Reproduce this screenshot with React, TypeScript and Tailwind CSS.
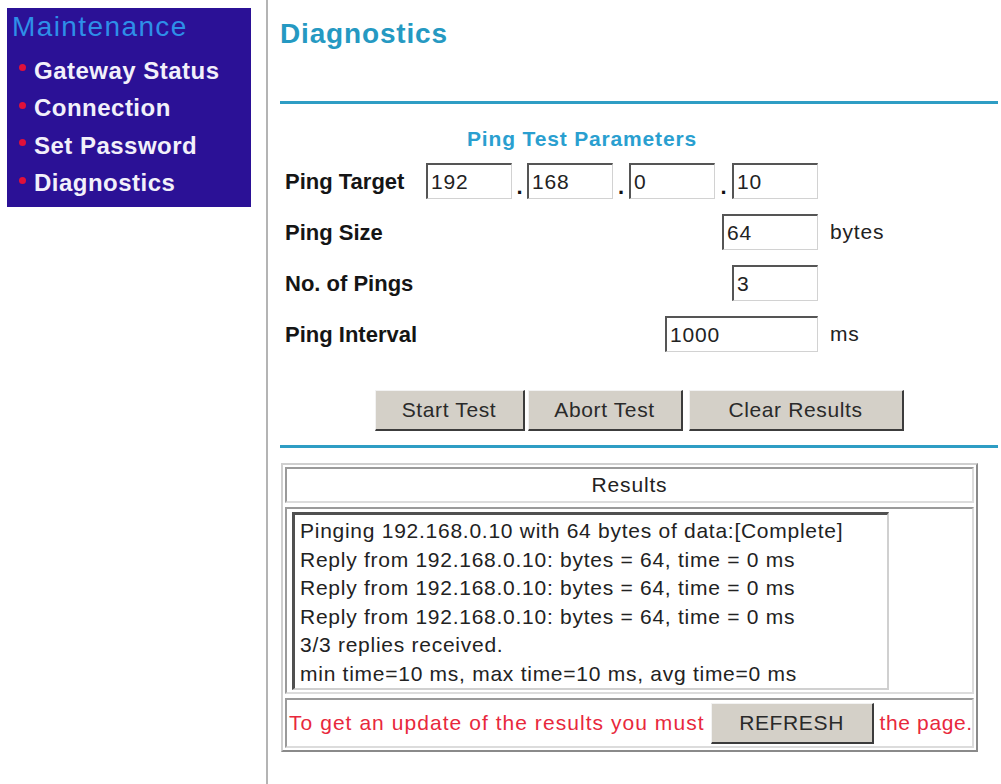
import React from "react";

const font = { fontFamily: '"Liberation Sans", Arial, sans-serif' };

function Field({ value, width }: { value: string; width: string }) {
  return (
    <input
      readOnly
      defaultValue={value}
      className={`${width} h-[36px] bg-white border-t-2 border-l-2 border-r border-b border-t-[#555555] border-l-[#555555] border-r-[#d2d2d2] border-b-[#d2d2d2] pl-[3px] text-[21px] tracking-[0.04em] text-[#222222] outline-none`}
    />
  );
}

function Dot({ width }: { width: string }) {
  return (
    <span className={`${width} self-end pb-[1px] text-center text-[22px] leading-none font-bold text-[#111111]`}>.</span>
  );
}

function Btn({ label, width }: { label: string; width: string }) {
  return (
    <button className={`${width} h-[41px] bg-[#d4d0c8] border-t border-l border-t-[#f2f2f2] border-l-[#f2f2f2] border-r-2 border-b-2 border-r-[#3c3c3c] border-b-[#3c3c3c] text-[21px] tracking-[0.03em] text-[#2a2a2a]`}>
      {label}
    </button>
  );
}

const menu = ["Gateway Status", "Connection", "Set Password", "Diagnostics"];

const lines = [
  "Pinging 192.168.0.10 with 64 bytes of data:[Complete]",
  "Reply from 192.168.0.10: bytes = 64, time = 0 ms",
  "Reply from 192.168.0.10: bytes = 64, time = 0 ms",
  "Reply from 192.168.0.10: bytes = 64, time = 0 ms",
  "3/3 replies received.",
  "min time=10 ms, max time=10 ms, avg time=0 ms",
];

export default function App() {
  return (
    <div className="flex w-[1001px] min-h-[784px] bg-white" style={font}>
      {/* left menu */}
      <div className="w-[266px] pl-[7px] pt-[8px]">
        <div className="w-[244px] h-[199px] bg-[#2b1196] pl-[5px] pt-[4px]">
          <div className="text-[28px] leading-[30px] tracking-[0.05em] text-[#2e8fe8]">Maintenance</div>
          <ul className="mt-[10px]">
            {menu.map((m) => (
              <li key={m} className="flex items-center h-[37.5px] pl-[7px]">
                <span className="w-[7px] h-[7px] mb-[6px] rounded-full bg-[#e0103a]" />
                <span className="ml-[8px] text-[24px] font-bold tracking-[0.02em] text-[#f2f0fa]">{m}</span>
              </li>
            ))}
          </ul>
        </div>
      </div>

      <div className="w-[2px] bg-[#b4b4b4]" />

      {/* main */}
      <div className="w-[730px] pl-[12px]">
        <div className="w-[718px]">
          <h1 className="pt-[18px] text-[28px] leading-[32px] font-bold tracking-[0.03em] text-[#2599c2]">Diagnostics</h1>
          <div className="mt-[51px] h-[3px] bg-[#2e9dc4]" />

          <div className="w-[604px] mt-[23px] text-center text-[21px] leading-[24px] font-bold tracking-[0.04em] text-[#2a9fd0]">
            Ping Test Parameters
          </div>

          <div className="mt-[12px] pl-[5px] flex flex-col gap-[15px] text-[#151515]">
            <div className="flex items-center h-[36px]">
              <span className="w-[141px] text-[22px] font-bold">Ping Target</span>
              <Field value="192" width="w-[86px]" />
              <Dot width="w-[15px]" />
              <Field value="168" width="w-[86px]" />
              <Dot width="w-[16px]" />
              <Field value="0" width="w-[86px]" />
              <Dot width="w-[17px]" />
              <Field value="10" width="w-[86px]" />
            </div>
            <div className="flex items-center h-[36px]">
              <div className="w-[533px] flex items-center">
                <span className="text-[22px] font-bold">Ping Size</span>
                <span className="ml-auto"><Field value="64" width="w-[96px]" /></span>
              </div>
              <span className="ml-[12px] text-[21px] tracking-[0.04em] text-[#222222]">bytes</span>
            </div>
            <div className="flex items-center h-[36px]">
              <div className="w-[533px] flex items-center">
                <span className="text-[22px] font-bold">No. of Pings</span>
                <span className="ml-auto"><Field value="3" width="w-[86px]" /></span>
              </div>
            </div>
            <div className="flex items-center h-[36px]">
              <div className="w-[533px] flex items-center">
                <span className="text-[22px] font-bold">Ping Interval</span>
                <span className="ml-auto"><Field value="1000" width="w-[153px]" /></span>
              </div>
              <span className="ml-[12px] text-[21px] tracking-[0.04em] text-[#222222]">ms</span>
            </div>
          </div>

          <div className="mt-[38px] flex justify-center">
            <Btn label="Start Test" width="w-[150px]" />
            <span className="ml-[3px]"><Btn label="Abort Test" width="w-[155px]" /></span>
            <span className="ml-[6px]"><Btn label="Clear Results" width="w-[215px]" /></span>
          </div>

          <div className="mt-[14px] h-[3px] bg-[#2e9dc4]" />

          {/* results table */}
          <div className="mt-[15px] ml-[1px] w-[697px] border-2 border-t-[#cfcfcf] border-l-[#cfcfcf] border-r-[#8a8a8a] border-b-[#8a8a8a] p-[2px] flex flex-col gap-[4px]">
            <div className="h-[36px] border-2 border-t-[#9a9a9a] border-l-[#9a9a9a] border-r-[#dcdcdc] border-b-[#dcdcdc] flex items-center justify-center text-[21px] tracking-[0.04em] text-[#222222]">
              Results
            </div>
            <div className="h-[187px] border-2 border-t-[#9a9a9a] border-l-[#9a9a9a] border-r-[#dcdcdc] border-b-[#dcdcdc] pl-[5px] pt-[3px]">
              <div className="w-[597px] h-[178px] bg-white border-t-[3px] border-l-[3px] border-r-2 border-b-2 border-t-[#505050] border-l-[#505050] border-r-[#d0d0d0] border-b-[#d0d0d0] pl-[5px] pt-[2px] text-[21px] leading-[28.6px] tracking-[0.035em] text-[#222222] overflow-hidden">
                {lines.map((l, i) => (
                  <div key={i} className="whitespace-nowrap">{l}</div>
                ))}
              </div>
            </div>
            <div className="h-[50px] border-2 border-t-[#9a9a9a] border-l-[#9a9a9a] border-r-[#dcdcdc] border-b-[#dcdcdc] pl-[2px] pt-[3px] flex items-baseline whitespace-nowrap text-[21px] tracking-[0.05em] text-[#e8283c]">
              <span>To get an update of the results you must</span>
              <span className="ml-[6px] tracking-[0.03em]"><Btn label="REFRESH" width="w-[163px]" /></span>
              <span className="ml-[6px] tracking-[0.03em]">the page.</span>
            </div>
          </div>
        </div>
      </div>
    </div>
  );
}
